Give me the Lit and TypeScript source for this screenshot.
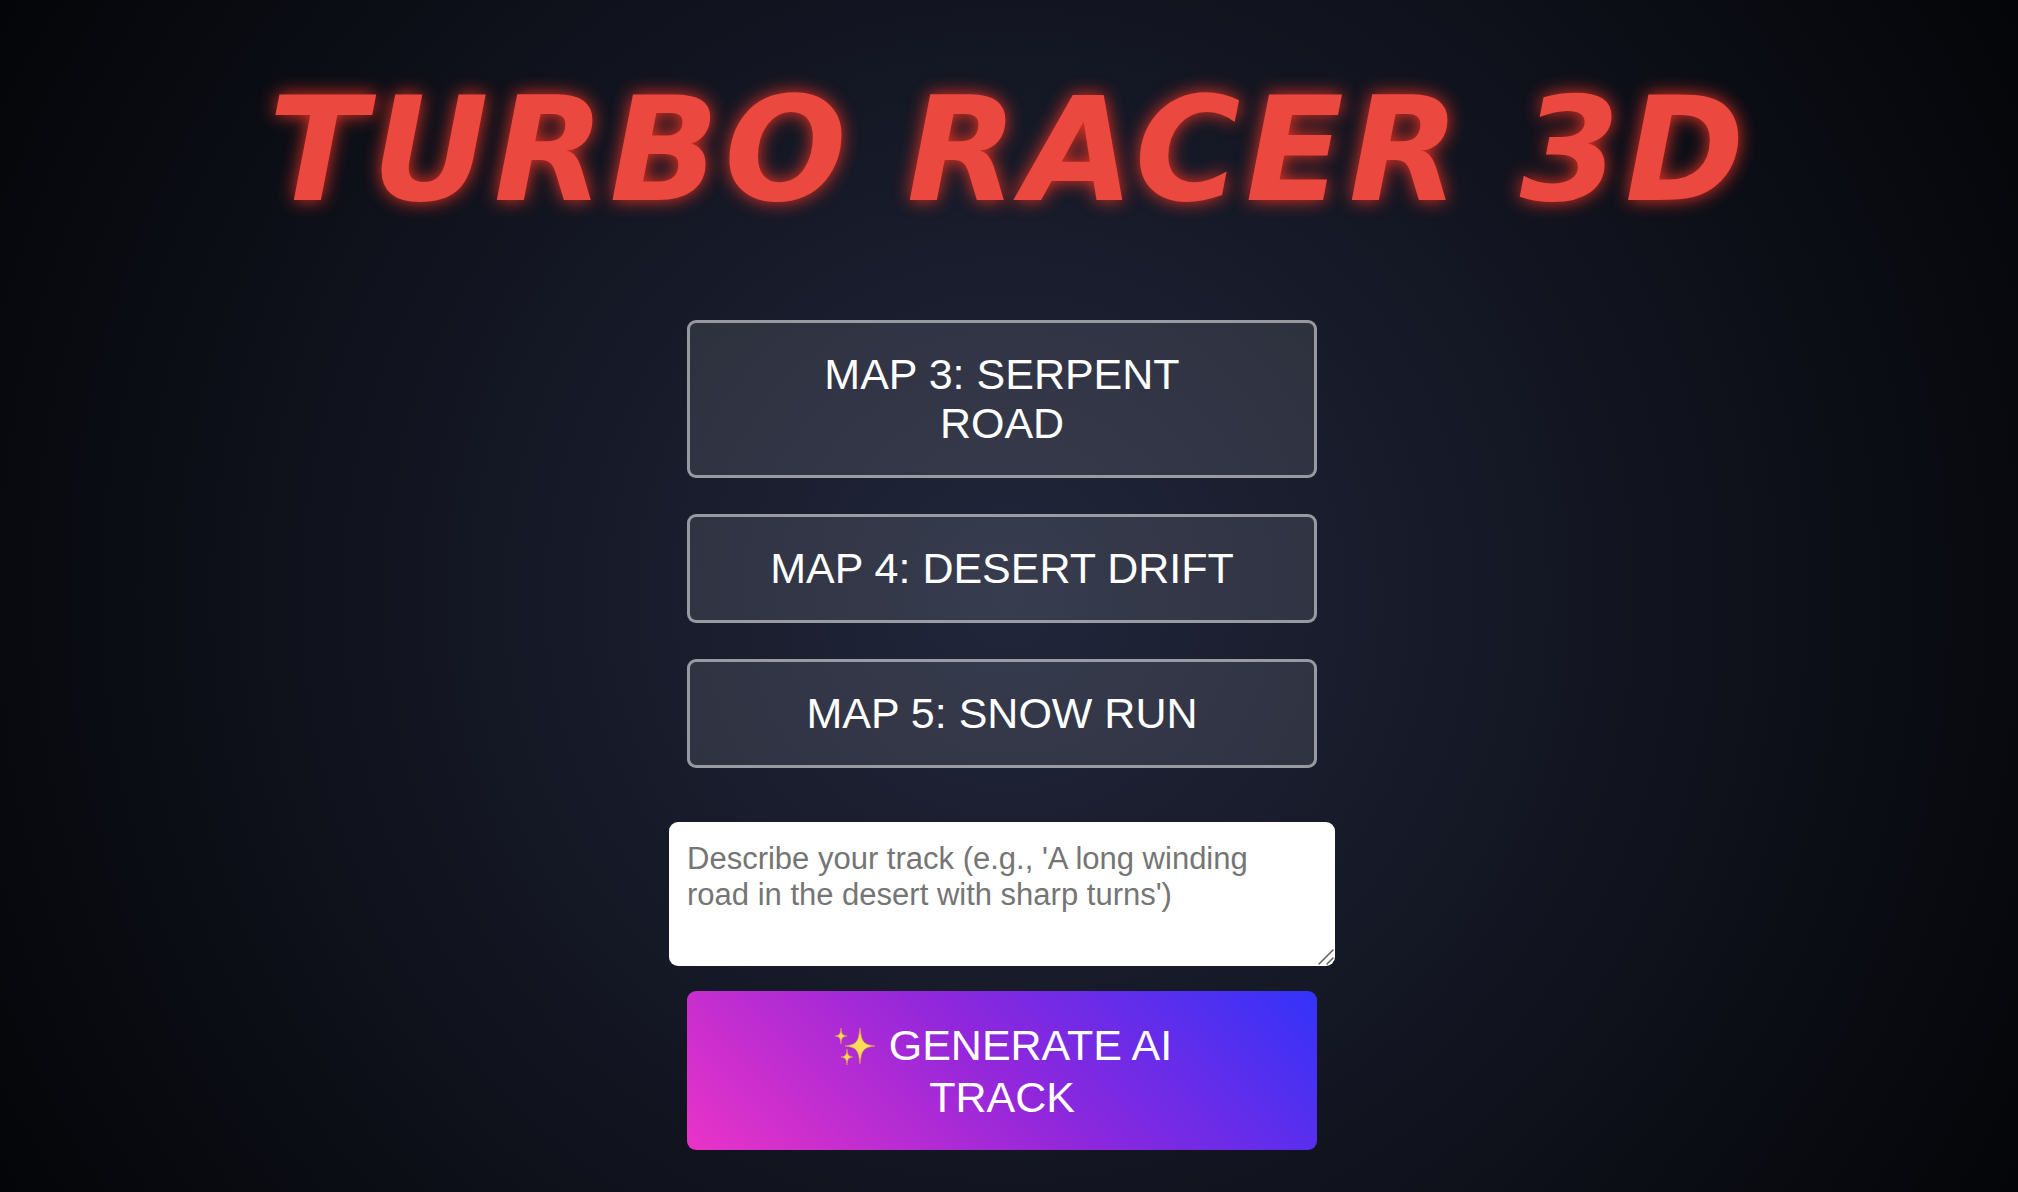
import { LitElement, html, css, svg } from "lit";
import { customElement, property, state } from "lit/decorators.js";

interface TrackMap {
  id: number;
  label: string;
}

const MAPS: TrackMap[] = [
  { id: 3, label: "MAP 3: SERPENT ROAD" },
  { id: 4, label: "MAP 4: DESERT DRIFT" },
  { id: 5, label: "MAP 5: SNOW RUN" },
];

/** Four-pointed star with thin concave rays. */
const star = (cx: number, cy: number, rx: number, ry: number) => svg`
  <path
    d="M${cx} ${cy - ry}
       C${cx + rx * 0.1} ${cy - ry * 0.24} ${cx + rx * 0.2} ${cy - ry * 0.08} ${cx + rx} ${cy}
       C${cx + rx * 0.2} ${cy + ry * 0.08} ${cx + rx * 0.1} ${cy + ry * 0.24} ${cx} ${cy + ry}
       C${cx - rx * 0.1} ${cy + ry * 0.24} ${cx - rx * 0.2} ${cy + ry * 0.08} ${cx - rx} ${cy}
       C${cx - rx * 0.2} ${cy - ry * 0.08} ${cx - rx * 0.1} ${cy - ry * 0.24} ${cx} ${cy - ry}Z"
    fill="#fbdc57"
    stroke="#e59a4a"
    stroke-width="1"
    stroke-opacity="0.6"
  />
`;

@customElement("sparkle-icon")
export class SparkleIcon extends LitElement {
  static styles = css`
    :host {
      display: inline-block;
      vertical-align: middle;
    }
    .icon {
      display: block;
      width: 45px;
      height: 44px;
    }
  `;

  render() {
    return html`
      <svg class="icon" viewBox="0 0 45 44" aria-hidden="true">
        ${star(28, 19, 15, 18)} ${star(9, 9, 6, 8)} ${star(15, 30, 6, 8)}
      </svg>
    `;
  }
}

@customElement("map-button")
export class MapButton extends LitElement {
  static styles = css`
    :host {
      display: block;
    }
    .button {
      display: block;
      box-sizing: border-box;
      width: 100%;
      margin: 0;
      padding: 27px 72px;
      border: 3px solid rgba(255, 255, 255, 0.5);
      border-radius: 9px;
      background: rgba(255, 255, 255, 0.1);
      color: #fff;
      font-family: "Liberation Sans", Arial, sans-serif;
      font-size: 43px;
      line-height: 49px;
      text-align: center;
      cursor: pointer;
    }
    .button:hover {
      background: rgba(255, 255, 255, 0.2);
    }
  `;

  @property() label = "";

  render() {
    return html`<button class="button" type="button">${this.label}</button>`;
  }
}

@customElement("track-generator")
export class TrackGenerator extends LitElement {
  static styles = css`
    :host {
      display: flex;
      flex-direction: column;
      gap: 25px;
    }
    .field {
      position: relative;
      display: flex;
    }
    .prompt {
      box-sizing: border-box;
      width: 100%;
      height: 144px;
      margin: 0;
      padding: 19px 18px 17px;
      border: 0;
      border-radius: 9px;
      background: #fff;
      color: #000;
      font-family: "Liberation Sans", Helvetica, Arial, sans-serif;
      font-size: 31px;
      line-height: 36px;
      resize: vertical;
    }
    .prompt::placeholder {
      color: #757575;
    }
    .prompt::-webkit-resizer {
      background: transparent;
    }
    .grip {
      position: absolute;
      right: 0;
      bottom: 0;
      width: 18px;
      height: 18px;
      pointer-events: none;
    }
    .generate {
      box-sizing: border-box;
      margin: 0 18px;
      padding: 28px 72px 27px;
      border: 0;
      border-radius: 9px;
      background: linear-gradient(45deg, #ea33c7, #9127db 50%, #3333fa);
      color: #fff;
      font-family: "Liberation Sans", Arial, sans-serif;
      font-size: 43px;
      line-height: 52px;
      text-align: center;
      cursor: pointer;
    }
  `;

  @state() private description = "";

  private onInput(event: Event) {
    this.description = (event.target as HTMLTextAreaElement).value;
  }

  render() {
    return html`
      <div class="field">
        <textarea
          class="prompt"
          aria-label="Track description"
          placeholder="Describe your track (e.g., 'A long winding road in the desert with sharp turns')"
          .value=${this.description}
          @input=${this.onInput}
        ></textarea>
        <svg class="grip" viewBox="0 0 18 18" aria-hidden="true">
          <path d="M2 16L16 2M10 16L16 10" stroke="#5c5c5c" stroke-width="1.5" stroke-linecap="round" />
        </svg>
      </div>
      <button class="generate" type="button">
        <sparkle-icon></sparkle-icon> GENERATE AI TRACK
      </button>
    `;
  }
}

@customElement("app-root")
export class AppRoot extends LitElement {
  static styles = css`
    :host {
      display: block;
    }
    .screen {
      display: flex;
      flex-direction: column;
      align-items: center;
      box-sizing: border-box;
      min-height: 100vh;
      padding: 66px 0 42px;
      background: radial-gradient(circle at center, #21263b, #040508);
    }
    .title {
      margin: 0 0 86px;
      color: #eb483f;
      font-family: "DejaVu Sans", Verdana, sans-serif;
      font-size: 144px;
      font-style: italic;
      font-weight: 700;
      letter-spacing: 5px;
      line-height: 168px;
      text-align: center;
      text-shadow: 0 0 18px #eb3323;
    }
    .menu {
      display: flex;
      flex-direction: column;
      gap: 54px;
      width: 666px;
      max-width: 100%;
      margin-right: 14px;
    }
    .maps {
      display: flex;
      flex-direction: column;
      gap: 36px;
      padding: 0 18px;
    }
  `;

  render() {
    return html`
      <main class="screen">
        <h1 class="title">TURBO RACER 3D</h1>
        <div class="menu">
          <nav class="maps" aria-label="Maps">
            ${MAPS.map((map) => html`<map-button .label=${map.label}></map-button>`)}
          </nav>
          <track-generator></track-generator>
        </div>
      </main>
    `;
  }
}
